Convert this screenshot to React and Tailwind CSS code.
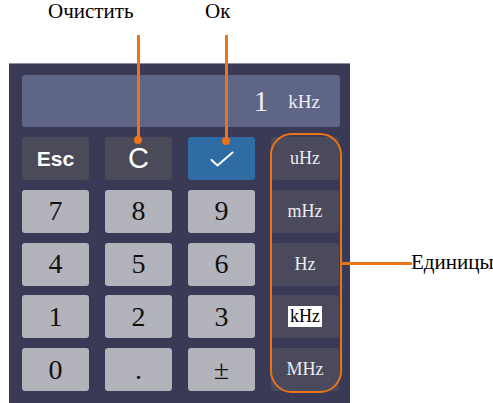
export default function App() {
  const keys = [
    ['7', '8', '9', 'mHz'],
    ['4', '5', '6', 'Hz'],
    ['1', '2', '3', 'kHz'],
    ['0', '.', '±', 'MHz'],
  ];

  return (
    <div className="relative w-[493px] h-[403px] bg-white overflow-hidden font-['Liberation_Serif','DejaVu_Serif',serif]">
      {/* Callout labels */}
      <span className="absolute left-[48px] top-[1px] text-[21px] leading-none text-black">Очистить</span>
      <span className="absolute left-[205px] top-[1px] text-[21px] leading-none text-black">Ок</span>
      <span className="absolute left-[411px] top-[252px] text-[21px] leading-none text-black">Единицы</span>

      {/* Keypad panel */}
      <div className="ml-[9px] mt-[63px] w-[341px] h-[340px] bg-[#3a3a57] border-t border-[#8e8ea0] pl-[13px] pt-[11px]">
        <div className="w-[318px] h-[52px] rounded-[3px] bg-[#5f6586] flex items-center justify-end pr-[20px] gap-[20px] text-[#eeeef2]">
          <span className="text-[29px] leading-none">1</span>
          <span className="text-[19px] leading-none">kHz</span>
        </div>

        <div className="mt-[10px] grid grid-cols-[67px_67px_67px_68px] gap-x-[16px] gap-y-[9.75px] auto-rows-[43px]">
          <div className="rounded-[3px] bg-[#4a4a59] flex items-center justify-center text-white text-[21px] font-bold font-['Liberation_Sans',Arial,sans-serif]">
            Esc
          </div>
          <div className="rounded-[3px] bg-[#4a4a59] flex items-center justify-center text-white text-[29px] leading-none font-['Liberation_Sans',Arial,sans-serif]">
            C
          </div>
          <div className="rounded-[3px] bg-[#2e6ca3] flex items-center justify-center">
            <svg width="24" height="16" viewBox="0 0 24 16" fill="none">
              <path d="M1.5 9 L7.5 14.5 L22.5 1.5" stroke="white" strokeWidth="2" strokeLinecap="round" strokeLinejoin="round" />
            </svg>
          </div>
          <div className="rounded-[3px] bg-[#4a4a5c] flex items-center justify-center text-[#ececf0] text-[18px]">uHz</div>

          {keys.map((row) =>
            row.map((k, i) =>
              i < 3 ? (
                <div key={k} className="rounded-[3px] bg-[#b3b3bb] flex items-center justify-center text-[#111] text-[28px] leading-none">
                  {k}
                </div>
              ) : (
                <div key={k} className="rounded-[3px] bg-[#4a4a5c] flex items-center justify-center text-[18px]">
                  {k === 'kHz' ? (
                    <span className="bg-white text-black px-[2px] leading-[21px]">kHz</span>
                  ) : (
                    <span className="text-[#ececf0]">{k}</span>
                  )}
                </div>
              )
            )
          )}
        </div>
      </div>

      {/* Orange annotations */}
      <div className="absolute left-[137px] top-[35px] w-[2.5px] h-[105px] bg-[#ea7518]" />
      <div className="absolute left-[134px] top-[136px] w-[8px] h-[8px] rounded-full bg-[#ea7518]" />
      <div className="absolute left-[225px] top-[35px] w-[2.5px] h-[106px] bg-[#ea7518]" />
      <div className="absolute left-[222px] top-[137px] w-[8px] h-[8px] rounded-full bg-[#ea7518]" />
      <div className="absolute left-[270px] top-[133px] w-[72px] h-[260px] rounded-[22px] border-[2.5px] border-[#ea7518]" />
      <div className="absolute left-[342px] top-[262px] w-[70px] h-[2.5px] bg-[#ea7518]" />
    </div>
  );
}
